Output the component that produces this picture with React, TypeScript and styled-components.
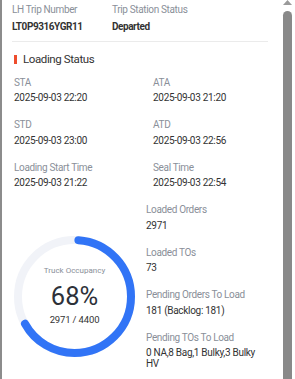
import React from "react";
import styled, { createGlobalStyle } from "styled-components";

const Global = createGlobalStyle`
  html, body { margin: 0; padding: 0; background: #ffffff; overflow: hidden; }
  * { box-sizing: border-box; }
  body { font-family: Roboto, "Liberation Sans", Arial, sans-serif; }
`;

const Frame = styled.div`
  display: flex;
  width: 295px;
  height: 379px;
  overflow: hidden;
`;

const LeftEdge = styled.div`
  width: 2px;
  background: #8c8c8c;
  flex: none;
`;

const Panel = styled.div`
  width: 280px;
  flex: none;
  background: #ffffff;
  padding: 2.7px 14px 0 10px;
  color: #333333;
`;

const ScrollBar = styled.div`
  width: 13px;
  flex: none;
  display: flex;
  flex-direction: column;
  align-items: flex-start;
  padding-left: 1px;
  background: #ffffff;
`;

const Thumb = styled.div`
  width: 9px;
  flex: 1;
  margin-top: 6px;
  background: #898989;
  border-radius: 4.5px 4.5px 0 0;
`;

const HeaderGrid = styled.div`
  display: grid;
  grid-template-columns: 100px 1fr;
`;

const Label = styled.div`
  font-size: 10px;
  line-height: 14px;
  color: #8a8f99;
  letter-spacing: -0.35px;
  white-space: nowrap;
`;

const HeaderValue = styled.div`
  font-size: 10px;
  line-height: 11px;
  font-weight: 700;
  color: #333333;
  letter-spacing: -0.45px;
  margin-top: 4.2px;
`;

const Divider = styled.div`
  height: 1px;
  background: #ebebeb;
  margin-top: 9px;
`;

const TitleRow = styled.div`
  display: flex;
  align-items: center;
  gap: 6px;
  height: 16px;
  margin-top: 9.25px;
  padding-left: 2px;
`;

const TitleBar = styled.span`
  width: 3px;
  height: 9px;
  background: #ee4d2d;
`;

const Title = styled.span`
  font-size: 11.5px;
  line-height: 16px;
  color: #333333;
  letter-spacing: -0.4px;
`;

const InfoGrid = styled.div`
  display: grid;
  grid-template-columns: 139px 1fr;
  row-gap: 15px;
  margin-top: 8.5px;
  padding-left: 2px;
`;

const Item = styled.div`
  display: flex;
  flex-direction: column;
`;

const Value = styled.div`
  font-size: 10px;
  line-height: 11px;
  color: #333333;
  letter-spacing: -0.3px;
  margin-top: 2.5px;
`;

const Bottom = styled.div`
  display: flex;
  gap: 11px;
  margin-top: 15.2px;
  padding-left: 2px;
`;

const GaugeWrap = styled.div`
  padding-top: 32.6px;
  flex: none;
`;

const Gauge = styled.div`
  display: grid;
  width: 121px;
  height: 121px;
  & > * { grid-area: 1 / 1; }
`;

const GaugeText = styled.div`
  display: flex;
  flex-direction: column;
  align-items: center;
  padding-top: 29.6px;
`;

const GaugeLabel = styled.div`
  font-size: 8px;
  line-height: 10px;
  color: #8a8f99;
`;

const GaugePercent = styled.div`
  font-size: 25.5px;
  line-height: 28px;
  color: #2d3139;
  margin-top: 6.5px;
`;

const GaugeSub = styled.div`
  font-size: 9.5px;
  line-height: 12px;
  color: #333333;
  letter-spacing: -0.15px;
  margin-top: 4.3px;
`;

const RightCol = styled.div`
  width: 120px;
  display: flex;
  flex-direction: column;
  gap: 15px;
`;

const times = [
  ["STA", "2025-09-03 22:20"],
  ["ATA", "2025-09-03 21:20"],
  ["STD", "2025-09-03 23:00"],
  ["ATD", "2025-09-03 22:56"],
  ["Loading Start Time", "2025-09-03 21:22"],
  ["Seal Time", "2025-09-03 22:54"],
];

const stats = [
  ["Loaded Orders", "2971"],
  ["Loaded TOs", "73"],
  ["Pending Orders To Load", "181 (Backlog: 181)"],
  ["Pending TOs To Load", "0 NA,8 Bag,1 Bulky,3 Bulky HV"],
];

function Ring({ pct }: { pct: number }) {
  const r = 56.5;
  const c = 2 * Math.PI * r;
  const len = c * pct - 8;
  return (
    <svg width="121" height="121" viewBox="0 0 121 121">
      <circle cx="60.5" cy="60.5" r={r} fill="none" stroke="#f1f3f8" strokeWidth="8" />
      <circle
        cx="60.5"
        cy="60.5"
        r={r}
        fill="none"
        stroke="#3174f6"
        strokeWidth="8"
        strokeLinecap="round"
        strokeDasharray={`${len} ${c}`}
        strokeDashoffset={-4}
        transform="rotate(-90 60.5 60.5)"
      />
    </svg>
  );
}

export default function App() {
  return (
    <>
      <Global />
      <Frame>
        <LeftEdge />
        <Panel>
          <HeaderGrid>
            <Item>
              <Label>LH Trip Number</Label>
              <HeaderValue>LT0P9316YGR11</HeaderValue>
            </Item>
            <Item>
              <Label>Trip Station Status</Label>
              <HeaderValue>Departed</HeaderValue>
            </Item>
          </HeaderGrid>
          <Divider />
          <TitleRow>
            <TitleBar />
            <Title>Loading Status</Title>
          </TitleRow>
          <InfoGrid>
            {times.map(([l, v]) => (
              <Item key={l}>
                <Label>{l}</Label>
                <Value>{v}</Value>
              </Item>
            ))}
          </InfoGrid>
          <Bottom>
            <GaugeWrap>
              <Gauge>
                <Ring pct={0.68} />
                <GaugeText>
                  <GaugeLabel>Truck Occupancy</GaugeLabel>
                  <GaugePercent>68%</GaugePercent>
                  <GaugeSub>2971 / 4400</GaugeSub>
                </GaugeText>
              </Gauge>
            </GaugeWrap>
            <RightCol>
              {stats.map(([l, v]) => (
                <Item key={l}>
                  <Label>{l}</Label>
                  <Value>{v}</Value>
                </Item>
              ))}
            </RightCol>
          </Bottom>
        </Panel>
        <ScrollBar>
          <svg width="9" height="5" viewBox="0 0 9 5">
            <polygon points="4.5,0 9,5 0,5" fill="#9a9a9a" />
          </svg>
          <Thumb />
        </ScrollBar>
      </Frame>
    </>
  );
}
